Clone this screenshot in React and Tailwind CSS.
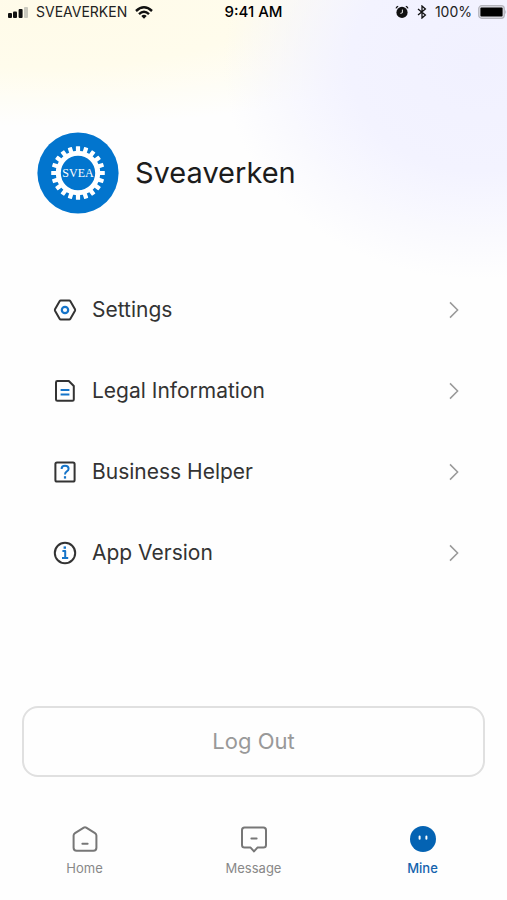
const TEETH = Array.from({ length: 20 }, (_, i) => i * 18);

function SignalIcon() {
  return (
    <svg width="20" height="12" viewBox="0 0 20 12" aria-hidden="true">
      <rect x="0" y="7" width="4" height="5" rx="1" fill="#111" />
      <rect x="5" y="5.4" width="4" height="6.6" rx="1" fill="#111" />
      <rect x="10.6" y="3" width="4" height="9" rx="1" fill="#111" />
      <rect x="16" y="1" width="4" height="11" rx="1" fill="#c9c8bd" />
    </svg>
  );
}

function WifiIcon() {
  return (
    <svg width="18" height="13" viewBox="0 0 18 13" fill="none" stroke="#111" strokeWidth="2.4" aria-hidden="true">
      <path d="M1 5 Q9 -2.4 17 5" />
      <path d="M4 8.1 Q9 3.4 14 8.1" />
      <path d="M9 12.8 L6.3 10 Q9 7.6 11.7 10 Z" fill="#111" stroke="none" />
    </svg>
  );
}

function AlarmIcon() {
  return (
    <svg width="14" height="14" viewBox="0 0 14 14" aria-hidden="true">
      <circle cx="7" cy="7.4" r="5.6" fill="#111" />
      <path d="M1 3.4 Q1.6 1.8 3.2 1.4 M13 3.4 Q12.4 1.8 10.8 1.4" stroke="#111" strokeWidth="1.2" fill="none" />
      <path d="M7.4 4.6 V7.8 L5.4 8.4" stroke="#fff" strokeWidth="0.9" fill="none" />
    </svg>
  );
}

function BluetoothIcon() {
  return (
    <svg width="10" height="14" viewBox="0 0 10 14" fill="none" stroke="#111" strokeWidth="1.3" aria-hidden="true">
      <path d="M1 4 L8.4 10 L5 13 V1 L8.4 4 L1 10" />
    </svg>
  );
}

function BatteryIcon() {
  return (
    <svg width="29" height="14" viewBox="0 0 29 14" aria-hidden="true">
      <rect x="0.7" y="0.7" width="25.6" height="12.6" rx="3" fill="#dcdce4" stroke="#b4b4bc" strokeWidth="1.2" />
      <rect x="2.4" y="2.4" width="22.2" height="9.2" rx="1" fill="#000" />
      <path d="M27.4 4.8 Q29 7 27.4 9.2 Z" fill="#aaaab2" />
    </svg>
  );
}

function Logo() {
  return (
    <svg className="size-[82px] shrink-0" viewBox="0 0 82 82" role="img" aria-label="SVEA">
      <circle cx="41" cy="41" r="40.6" fill="#0275ce" />
      {TEETH.map((angle) => (
        <rect key={angle} x="38.9" y="14.2" width="4.2" height="6.4" rx="0.5" fill="#fff" transform={`rotate(${angle} 41 41)`} />
      ))}
      <circle cx="41" cy="41" r="19.7" fill="none" stroke="#fff" strokeWidth="5" />
      <text x="41" y="45" textAnchor="middle" fontFamily="'Liberation Serif', serif" fontSize="12" fill="#fff">
        SVEA
      </text>
    </svg>
  );
}

function MenuIcon({ children }) {
  return (
    <svg className="size-6 shrink-0" viewBox="0 0 24 24" fill="none" stroke="#333" strokeWidth="2" strokeLinejoin="round" aria-hidden="true">
      {children}
    </svg>
  );
}

const MENU = [
  {
    label: "Settings",
    icon: (
      <MenuIcon>
        <path d="M7.8 2.5 H16.2 Q17 2.5 17.4 3.2 L22 11.3 Q22.3 12 22 12.7 L17.4 20.8 Q17 21.5 16.2 21.5 H7.8 Q7 21.5 6.6 20.8 L2 12.7 Q1.7 12 2 11.3 L6.6 3.2 Q7 2.5 7.8 2.5 Z" />
        <circle cx="12" cy="12" r="3.2" stroke="#1574c9" strokeWidth="2.2" />
      </MenuIcon>
    ),
  },
  {
    label: "Legal Information",
    icon: (
      <MenuIcon>
        <path d="M4.4 2 H15.8 L20.8 7 V20.4 Q20.8 21.8 19.4 21.8 H4.4 Q3 21.8 3 20.4 V3.4 Q3 2 4.4 2 Z" />
        <path d="M7.6 11 H16.4 M7.6 15.6 H16.4" stroke="#1574c9" />
      </MenuIcon>
    ),
  },
  {
    label: "Business Helper",
    icon: (
      <MenuIcon>
        <rect x="2.4" y="2.4" width="19.2" height="19.2" rx="1.6" />
        <path d="M8.6 9 Q8.6 5.8 12 5.8 Q15.6 5.8 15.6 8.8 Q15.6 10.4 13.8 11.4 Q12 12.4 12 14.6" stroke="#1574c9" />
        <path d="M12 16.2 V18.6" stroke="#1574c9" strokeWidth="2.2" />
      </MenuIcon>
    ),
  },
  {
    label: "App Version",
    icon: (
      <MenuIcon>
        <circle cx="12" cy="12" r="10.2" />
        <path d="M9.4 10 H12.2 V17 M9 17 H15.2" stroke="#1574c9" />
        <path d="M11.8 5.4 V7.8" stroke="#1574c9" strokeWidth="2.4" />
      </MenuIcon>
    ),
  },
];

function TabIcon({ children }) {
  return (
    <svg className="size-7" viewBox="0 0 28 28" fill="none" stroke="#777" strokeWidth="2" strokeLinejoin="round" strokeLinecap="round" aria-hidden="true">
      {children}
    </svg>
  );
}

const TABS = [
  {
    label: "Home",
    icon: (
      <TabIcon>
        <path d="M12.8 2.6 Q14 1.8 15.2 2.6 L24 8.2 Q25.4 9.1 25.4 10.6 V22.8 Q25.4 25.8 22.4 25.8 H5.6 Q2.6 25.8 2.6 22.8 V10.6 Q2.6 9.1 4 8.2 Z" />
        <path d="M11.4 18.8 H16.6" />
      </TabIcon>
    ),
  },
  {
    label: "Message",
    icon: (
      <TabIcon>
        <path d="M4.6 2.6 H23.4 Q26 2.6 26 5.2 V20 Q26 22.6 23.4 22.6 H17.4 L14 26.4 L10.6 22.6 H4.6 Q2 22.6 2 20 V5.2 Q2 2.6 4.6 2.6 Z" />
        <path d="M11.4 13.4 H16.6" />
      </TabIcon>
    ),
  },
  {
    label: "Mine",
    active: true,
    icon: (
      <TabIcon>
        <circle cx="14" cy="14" r="13" fill="#0463b3" stroke="none" />
        <path d="M10.6 11.6 V13.8 M17.4 11.6 V13.8" stroke="#fff" />
      </TabIcon>
    ),
  },
];

export default function App() {
  return (
    <div className="flex min-h-screen flex-col bg-[#fefefe] bg-[radial-gradient(ellipse_50%_24%_at_94%_7%,#f1f1ff_0%,#f3f3ff_50%,#f3f3ff00_100%),radial-gradient(ellipse_85%_13%_at_8%_1%,#fffbe9_0%,#fffcec_50%,#fffcec00_100%)] font-['Inter','Liberation_Sans',sans-serif]">
      <header className="grid h-6 grid-cols-[minmax(0,1fr)_auto_minmax(0,1fr)] items-center text-sm text-[#222]">
        <div className="flex items-center gap-2 pl-2">
          <SignalIcon />
          <div className="flex items-center gap-2">
            <span>SVEAVERKEN</span>
            <WifiIcon />
          </div>
        </div>
        <time className="text-[15px] font-medium text-black">9:41 AM</time>
        <div className="flex items-center justify-end gap-2">
          <AlarmIcon />
          <BluetoothIcon />
          <div className="flex items-center gap-1.5">
            <span>100%</span>
            <BatteryIcon />
          </div>
        </div>
      </header>

      <main className="flex flex-1 flex-col">
        <section className="flex items-center gap-4 px-[37px] pt-[108px] pb-[55px]">
          <Logo />
          <h1 className="text-[29px] font-normal text-[#1c1c1c]">Sveaverken</h1>
        </section>

        <nav aria-label="Account" className="px-12">
          <ul>
            {MENU.map(({ label, icon }) => (
              <li key={label}>
                <button type="button" className="flex h-[81px] w-full items-center gap-[15px] pl-[5px] text-left text-[21px] text-[#333]">
                  {icon}
                  <span className="flex-1">{label}</span>
                  <svg className="h-[18px] w-[10px]" viewBox="0 0 10 18" fill="none" stroke="#999" strokeWidth="1.5" aria-hidden="true">
                    <path d="M1 1.4 L8.6 9 L1 16.6" />
                  </svg>
                </button>
              </li>
            ))}
          </ul>
        </nav>

        <div className="mt-auto px-[22px] pt-8">
          <button type="button" className="h-[71px] w-full rounded-2xl border-2 border-[#e0e0e0] text-[22px] text-[#999]">
            Log Out
          </button>
        </div>
      </main>

      <footer>
        <nav aria-label="Main" className="grid grid-cols-3 pt-12 pb-5">
          {TABS.map(({ label, icon, active }) => (
            <a
              key={label}
              href={`#${label.toLowerCase()}`}
              aria-current={active ? "page" : undefined}
              className={`flex flex-col items-center gap-[3px] text-[13px] leading-6 ${active ? "font-medium text-[#1463ad]" : "text-[#888]"}`}
            >
              {icon}
              {label}
            </a>
          ))}
        </nav>
      </footer>
    </div>
  );
}
